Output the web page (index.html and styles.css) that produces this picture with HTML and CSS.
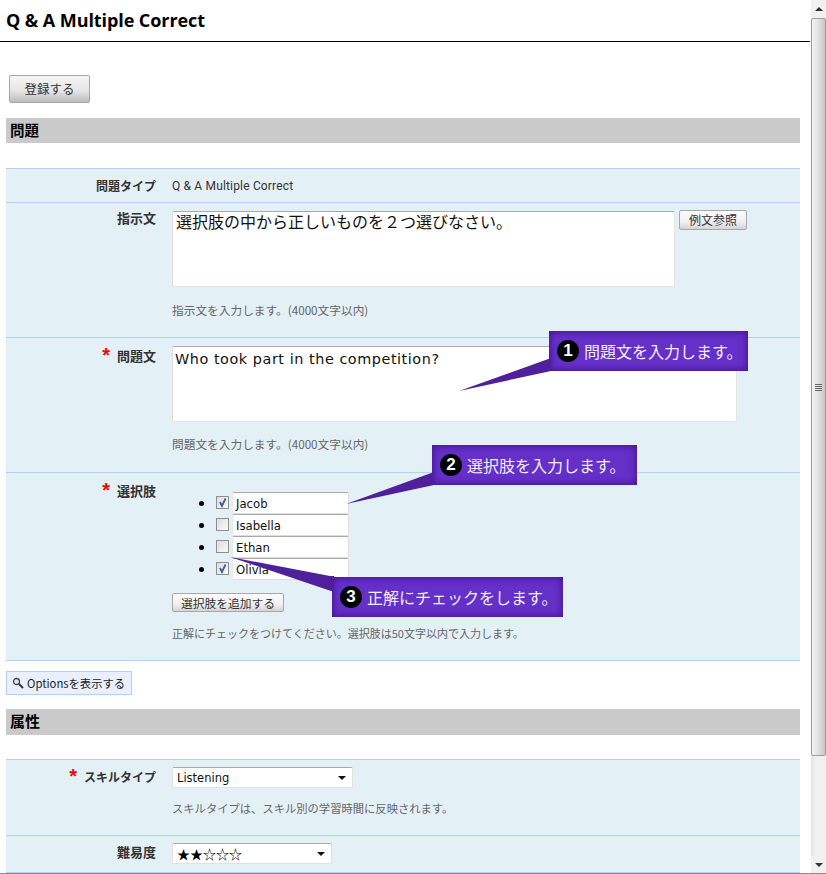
FILE: index.html
```html
<!DOCTYPE html>
<html lang="ja">
<head>
<meta charset="utf-8">
<title>Q &amp; A Multiple Correct</title>
<link rel="stylesheet" href="styles.css">
</head>
<body>
<div class="window">
  <main class="page">
    <h1 class="title">Q &amp; A Multiple Correct</h1>
    <div class="content">
      <button class="btn-register" type="button">登録する</button>
      <h2 class="section">問題</h2>
      <div class="form first">
        <div class="row row-type">
          <div class="label kana">問題タイプ</div>
          <div class="field">Q &amp; A Multiple Correct</div>
        </div>
        <div class="row row-inst">
          <div class="label">指示文</div>
          <div class="field">
            <div class="inline">
              <div class="textarea inst-area">選択肢の中から正しいものを２つ選びなさい。</div>
              <button class="btn-small sample" type="button">例文参照</button>
            </div>
            <p class="help help-a">指示文を入力します。(4000文字以内)</p>
          </div>
        </div>
        <div class="row row-q">
          <div class="label"><span class="req">*</span>問題文</div>
          <div class="field">
            <div class="textarea q-area">Who took part in the competition?</div>
            <p class="help help-b">問題文を入力します。(4000文字以内)</p>
          </div>
        </div>
        <div class="row row-choice">
          <div class="label"><span class="req">*</span>選択肢</div>
          <div class="field">
            <ul class="choices">
              <li><span class="check on"><svg viewBox="0 0 11 11"><path d="M3 5 L5 9 L8.5 1.5" fill="none" stroke="#3f5ca8" stroke-width="1.8"/></svg></span><span class="input">Jacob</span></li>
              <li><span class="check"></span><span class="input">Isabella</span></li>
              <li><span class="check"></span><span class="input">Ethan</span></li>
              <li><span class="check on"><svg viewBox="0 0 11 11"><path d="M3 5 L5 9 L8.5 1.5" fill="none" stroke="#3f5ca8" stroke-width="1.8"/></svg></span><span class="input">Olivia</span></li>
            </ul>
            <button class="btn-small add" type="button">選択肢を追加する</button>
            <p class="help help-c">正解にチェックをつけてください。選択肢は50文字以内で入力します。</p>
          </div>
        </div>
      </div>
      <button class="btn-options" type="button"><svg class="lens" viewBox="0 0 12 12"><circle cx="4.5" cy="4.5" r="3" fill="#dfe8f5" stroke="#444" stroke-width="1.3"/><path d="M7 7 L11 11" stroke="#333" stroke-width="2"/></svg>Optionsを表示する</button>
      <h2 class="section attr">属性</h2>
      <div class="form">
        <div class="row row-skill">
          <div class="label kana"><span class="req">*</span>スキルタイプ</div>
          <div class="field">
            <div class="select skill"><span>Listening</span><i class="arrow"></i></div>
            <p class="help help-s">スキルタイプは、スキル別の学習時間に反映されます。</p>
          </div>
        </div>
        <div class="row row-level">
          <div class="label">難易度</div>
          <div class="field">
            <div class="select level"><span>★★☆☆☆</span><i class="arrow"></i></div>
          </div>
        </div>
      </div>
    </div>

    <div class="callout c1">
      <svg class="tail" width="92" height="36" viewBox="0 0 92 36"><path d="M92 0 L0 33 L92 13 Z" fill="#4f1f9c"/></svg>
      <span class="num">1</span>問題文を入力します。
    </div>
    <div class="callout c2">
      <svg class="tail" width="88" height="36" viewBox="0 0 88 36"><path d="M88 0 L0 32 L88 13 Z" fill="#4f1f9c"/></svg>
      <span class="num">2</span>選択肢を入力します。
    </div>
    <div class="callout c3">
      <svg class="tail" width="104" height="38" viewBox="0 0 104 38"><path d="M0 0 L100 19 L104 19 L104 35 Z" fill="#4f1f9c"/></svg>
      <span class="num">3</span>正解にチェックをします。
    </div>
  </main>

  <aside class="scrollbar">
    <div class="sb-btn"><i class="up"></i></div>
    <div class="sb-thumb"><span class="grip"></span></div>
    <div class="sb-track"></div>
    <div class="sb-btn bottom"><i class="down"></i></div>
  </aside>
</div>
</body>
</html>
```
FILE: styles.css
```css
* { box-sizing: border-box; }
html, body { margin: 0; padding: 0; height: 874px; overflow: hidden; background: #fff; }
body { font-family: "Noto Sans CJK JP", "Liberation Sans", sans-serif; font-size: 12px; color: #333; }
.window { display: flex; height: 874px; border-bottom: 1px solid #8a8a8a; }
.page { position: relative; width: 811px; height: 873px; overflow: hidden; flex: none; }
.title {
  margin: 0 1px 0 0; height: 42px; padding: 9px 0 0 6px;
  border-bottom: 1px solid #000; font: bold 18px/22px "Open Sans", "Liberation Sans", sans-serif; color: #000;
  letter-spacing: -.08px;
}
.content { padding: 33px 11px 0 6px; }
button { font-family: inherit; cursor: default; }
.btn-register {
  display: block; width: 81px; height: 28px; margin-left: 3px; padding: 0;
  border: 1px solid #a8a8a8; border-radius: 2px; font-size: 12.5px; line-height: 26px; color: #333;
  background: linear-gradient(#f6f6f6, #e6e6e6 55%, #bcbcbc);
}
.section {
  margin: 15px 0 25px; height: 25px; padding-left: 4px; background: #cacaca;
  font-size: 14.5px; line-height: 24px; font-weight: bold; color: #000;
}
.section.attr { margin: 14px 0 24px; height: 26px; font-size: 15px; }
.form { background: #e3f0f5; border-bottom: 1px solid #b5d0f5; }
.row { display: flex; border-top: 1px solid #b5d0f5; }
.label { width: 150px; flex: none; text-align: right; font-weight: bold; font-size: 13px; line-height: 16px; color: #333; white-space: nowrap; }
.label.kana { font-size: 12px; }
.req { color: #f00; font-size: 20px; line-height: 14px; margin-right: 7px; font-family: "Liberation Sans", sans-serif; vertical-align: -1px; }
.field { margin-left: 16px; flex: 1; min-width: 0; }
.row-type { height: 34px; align-items: center; }
.row-type .field { font-family: "Roboto", sans-serif; color: #333; font-size: 12px; letter-spacing: .17px; }
.row-inst { height: 135px; padding-top: 8px; }
.row-q { height: 135px; padding-top: 8px; }
.row-choice { height: 188px; padding-top: 9px; }
.row-skill { height: 76px; padding-top: 7px; }
.row-level { height: 37px; padding-top: 7px; }
.row-inst .label { margin-top: -1px; }
.row-q .label { margin-top: 2px; }
.row-choice .label { margin-top: 1px; }
.row-skill .label { padding-top: 2px; }
.row-level .label { padding-top: 1px; }
.inline { display: flex; align-items: flex-start; gap: 4px; }
.textarea {
  background: #fff; border: 1px solid; border-color: #a9a9a9 #e4e4e4 #e4e4e4 #dcdcdc; border-radius: 2px;
  color: #111;
}
.inst-area { width: 503px; height: 76px; padding: 0 3px; font-size: 16px; line-height: 19px; }
.q-area { width: 565px; height: 76px; padding: 1px 2px; font-family: "DejaVu Sans", sans-serif; font-size: 14.4px; line-height: 22px; letter-spacing: .55px; }
.btn-small {
  height: 20px; padding: 0; border: 1px solid #a8a8a8; border-radius: 2px; font-size: 12px; line-height: 18px; color: #333;
  background: linear-gradient(#fbfbfb, #f0f0f0 60%, #d4d4d4);
}
.sample { width: 68px; margin-top: -1px; }
.add { display: block; width: 112px; height: 19px; margin-top: 13px; font-size: 11.75px; line-height: 17px; }
.help { margin: 0; font-size: 11.7px; line-height: 16px; color: #666; white-space: nowrap; }
.help-a { margin-top: 15px; }
.help-b { margin-top: 14px; }
.help-c { margin-top: 13px; font-size: 11px; }
.help-s { margin-top: 12px; font-size: 11.3px; }
.choices { list-style: none; margin: 10px 0 0; padding: 0 0 0 27px; }
.choices li { display: flex; height: 22px; color: #000; }
.choices li::before { content: ""; flex: none; width: 5px; height: 5px; margin: 9px 12px 0 0; border-radius: 50%; background: #000; }
.check {
  flex: none; display: block; width: 13px; height: 13px; margin: 4px 3px 0 0; border: 1px solid #8f8f8f;
  background: linear-gradient(135deg, #dcdcd8, #fbfbfb);
}
.check svg { display: block; width: 11px; height: 11px; }
.input {
  flex: none; display: block; width: 117px; height: 22px; padding: 0 3px; background: #fff;
  border: 1px solid; border-color: #a9a9a9 #dedede #dedede #e8e8e8; border-radius: 2px;
  font-family: "DejaVu Sans", sans-serif; font-size: 11.7px; line-height: 22px; color: #111;
}
.btn-options {
  display: block; margin-top: 10px; width: 126px; height: 24px; padding: 0 0 0 5px; text-align: left;
  border: 1px solid #b5d0f5; background: #e8f0fe; font-size: 11.3px; line-height: 22px; color: #222;
  font-family: "Noto Sans CJK JP", sans-serif; white-space: nowrap;
}
.lens { width: 12px; height: 12px; margin-right: 3px; vertical-align: -1px; }
.select {
  display: flex; justify-content: space-between; align-items: center; background: #fff; height: 21px;
  padding: 0 6px 0 4px; border: 1px solid; border-color: #a9a9a9 #e0e0e0 #e0e0e0 #e4e4e4; border-radius: 2px;
  color: #111;
}
.skill { width: 181px; font-family: "DejaVu Sans", sans-serif; font-size: 11.5px; }
.level { width: 160px; font-size: 13px; color: #000; }
.arrow { border: 4px solid transparent; border-top: 4px solid #111; border-bottom: 0; width: 0; height: 0; }
.callout {
  position: absolute; height: 40px; padding-left: 8px; display: flex; align-items: center; gap: 5px;
  background: #6430c8; box-shadow: inset 0 0 6px 2px #48179a;
  color: #f2eefc; font-size: 16px; white-space: nowrap;
}
.num {
  display: flex; align-items: center; justify-content: center; flex: none; width: 22px; height: 22px; border-radius: 50%;
  background: #000; color: #fff; font: bold 17px/22px "Liberation Sans", sans-serif;
}
.tail { position: absolute; display: block; }
.c1 { left: 549px; top: 331px; width: 199px; }
.c1 .tail { left: -90px; top: 27px; }
.c2 { left: 432px; top: 445px; width: 205px; }
.c2 .tail { left: -86px; top: 27px; }
.c3 { left: 332px; top: 577px; width: 231px; }
.c3 .tail { left: -102px; top: -20px; }
.scrollbar { width: 15px; flex: none; height: 873px; display: flex; flex-direction: column; background: #f0f0f0; }
.sb-btn { height: 17px; flex: none; display: flex; align-items: center; justify-content: center; background: #f1f1f1; }
.up { width: 0; height: 0; border: 4px solid transparent; border-bottom: 4px solid #333; border-top: 0; }
.down { width: 0; height: 0; border: 4px solid transparent; border-top: 4px solid #333; border-bottom: 0; }
.sb-thumb {
  height: 738px; flex: none; display: flex; align-items: center; justify-content: center;
  border: 1px solid #9c9c9c; border-radius: 2px; background: linear-gradient(90deg, #f2f2f2, #e6e6e6 40%, #c6c6c6);
  margin-top: 1px;
}
.grip { width: 7px; height: 7px; background: repeating-linear-gradient(#666 0 1px, transparent 1px 2px); }
.sb-track { flex: 1; background: linear-gradient(90deg, #e2e2e2, #f1f1f1 30%); }
```
